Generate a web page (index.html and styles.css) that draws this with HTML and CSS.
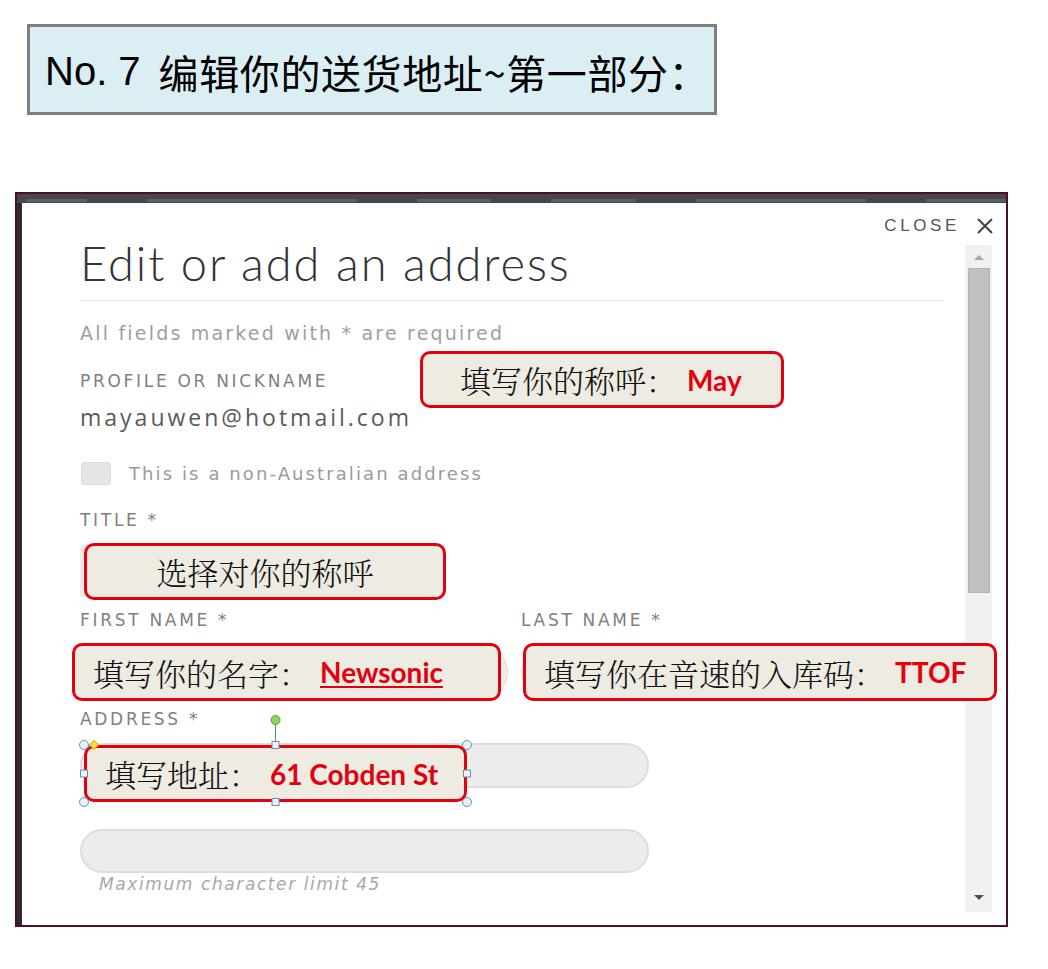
FILE: index.html
```html
<!DOCTYPE html>
<html lang="zh-CN">
<head>
    <meta charset="UTF-8">
    <meta name="viewport" content="width=device-width, initial-scale=1.0">
    <title>No. 7 编辑你的送货地址</title>
    <link rel="stylesheet" href="styles.css">
</head>
<body>
    <div class="slide-title"><span class="num">No. 7</span>编辑你的送货地址~第一部分：</div>

    <div class="shot">
        <!-- page nav peeking out behind the modal -->
        <div class="nav-strip">
            <span class="w1"></span><span class="w2"></span><span class="w3"></span><span class="w4"></span><span class="w5"></span><span class="w6"></span>
        </div>

        <div class="modal">
            <div class="close-row">
                <span>CLOSE</span>
                <svg width="16" height="16" viewBox="0 0 16 16"><path d="M1 1 L15 15 M15 1 L1 15" stroke="#444" stroke-width="2" fill="none"/></svg>
            </div>

            <div class="form">
                <h1>Edit or add an address</h1>
                <p class="note">All fields marked with * are required</p>

                <div class="label profile-label">PROFILE OR NICKNAME</div>
                <div class="email">mayauwen@hotmail.com</div>

                <div class="check"><span class="box"></span>This is a non-Australian address</div>

                <div class="label title-label">TITLE *</div>
                <div class="select"></div>

                <div class="name-row">
                    <div>
                        <div class="label">FIRST NAME *</div>
                        <div class="field first"></div>
                    </div>
                    <div>
                        <div class="label">LAST NAME *</div>
                        <div class="field"></div>
                    </div>
                </div>

                <div class="label address-label">ADDRESS *</div>
                <div class="pill"></div>
                <div class="pill second"></div>
                <div class="hint">Maximum character limit 45</div>
            </div>

            <div class="scrollbar">
                <span class="arrow up"></span>
                <span class="thumb"></span>
                <span class="arrow down"></span>
            </div>

            <!-- annotation callouts over the form -->
            <div class="callout c-nick">填写你的称呼：<b>May</b></div>
            <div class="callout c-title">选择对你的称呼</div>
            <div class="callout c-first">填写你的名字：<b class="underlined">Newsonic</b></div>
            <div class="callout c-last">填写你在音速的入库码：<b>TTOF</b></div>
            <div class="callout c-address">填写地址：<b>61 Cobden St</b></div>

            <svg class="handles" width="984" height="722" viewBox="0 0 984 722">
                <line x1="253.5" y1="521" x2="253.5" y2="539" stroke="#5a7fa0" stroke-width="1"/>
                <circle cx="253.5" cy="517" r="4.5" fill="#8fd35a" stroke="#5b9a3a" stroke-width="1"/>
                <circle cx="62" cy="542" r="4.5" fill="#e6f3fa" stroke="#6e8ca8" stroke-width="1"/>
                <circle cx="445" cy="542" r="4.5" fill="#e6f3fa" stroke="#6e8ca8" stroke-width="1"/>
                <circle cx="62" cy="599" r="4.5" fill="#e6f3fa" stroke="#6e8ca8" stroke-width="1"/>
                <circle cx="445" cy="599" r="4.5" fill="#e6f3fa" stroke="#6e8ca8" stroke-width="1"/>
                <rect x="250" y="538.5" width="7" height="7" fill="#e6f3fa" stroke="#6e8ca8" stroke-width="1"/>
                <rect x="250" y="595.5" width="7" height="7" fill="#e6f3fa" stroke="#6e8ca8" stroke-width="1"/>
                <rect x="58.5" y="567" width="7" height="7" fill="#e6f3fa" stroke="#6e8ca8" stroke-width="1"/>
                <rect x="441.5" y="567" width="7" height="7" fill="#e6f3fa" stroke="#6e8ca8" stroke-width="1"/>
                <path d="M72 537.5 L76.5 542 L72 546.5 L67.5 542 Z" fill="#f6e33c" stroke="#b19a1c" stroke-width="1"/>
            </svg>
        </div>
    </div>
</body>
</html>
```

FILE: styles.css
```css
body { margin: 0; background: #fff; }

/* slide heading */
.slide-title {
    box-sizing: border-box;
    width: 690px; height: 91px;
    margin: 24px 0 0 27px;
    padding: 4px 0 0 15px;
    border: 3px solid #7f7f7f;
    background: #dbeef4;
    display: flex; align-items: center;
    font-family: "Noto Sans CJK SC", sans-serif;
    font-size: 40px; color: #000; white-space: nowrap;
    letter-spacing: 0.6px;
}
.slide-title .num { font-family: "Liberation Sans", sans-serif; margin-right: 18px; letter-spacing: 0; }

/* screenshot frame */
.shot {
    width: 984px;
    margin: 77px 0 0 15px;
    padding-left: 5px;
    border: 2px solid #4e0f2f;
    background: #2f2b2d;
}
.nav-strip {
    height: 9px; margin-left: -5px;
    background: #474747;
    display: flex; align-items: flex-end; gap: 60px;
    padding-left: 10px;
}
.nav-strip span { height: 3px; margin-bottom: 1px; background: #5f5f5f; border-radius: 1px; }
.nav-strip .w1 { width: 60px; }
.nav-strip .w2 { width: 210px; }
.nav-strip .w3 { width: 75px; }
.nav-strip .w4 { width: 85px; }
.nav-strip .w5 { width: 170px; }
.nav-strip .w6 { width: 80px; }

.modal {
    position: relative;
    height: 722px; box-sizing: border-box;
    background: #fff;
    padding: 14px 14px 13px 58px;
    display: grid;
    grid-template-columns: 1fr 27px;
    grid-template-rows: 22px 1fr;
    column-gap: 21px;
}

.close-row {
    grid-column: 1 / -1;
    justify-self: end;
    margin-right: -1px;
    display: flex; align-items: center; gap: 17px;
    height: 18px;
    font: 17px "Liberation Sans", sans-serif; letter-spacing: 3.6px; color: #555;
}

.form { font-family: "DejaVu Sans", sans-serif; }
.form h1 {
    margin: 1px 0 14px;
    font: 300 47px/46px "Lato", sans-serif; color: #333; letter-spacing: 1.9px;
    padding-bottom: 14px;
    border-bottom: 1px solid #e3e3e3;
}
.note { margin: 21px 0 0; font-size: 19px; line-height: 22px; color: #9e9e9e; letter-spacing: 2.2px; }
.label { font: 17px/20px "DejaVu Sans", sans-serif; color: #808080; letter-spacing: 2.7px; }
.profile-label { margin-top: 27px; }
.email { margin-top: 13px; font: 23px/27px "Open Sans", sans-serif; color: #5a5a5a; letter-spacing: 3px; }

.check { margin-top: 31px; display: flex; align-items: center; gap: 18px; height: 23px; font-size: 18px; color: #9a9a9a; letter-spacing: 2.1px; }
.check .box { width: 30px; height: 23px; margin-left: 1px; border-radius: 3px; background: #e6e6e6; border: 1px solid #dcdcdc; box-sizing: border-box; }

.title-label { margin-top: 25px; }
.select { margin-top: 15px; width: 340px; height: 52px; border-radius: 4px; background: #ececec; }

.name-row { margin-top: 13px; display: grid; grid-template-columns: 441px 1fr; }
.field { margin-top: 15px; height: 55px; border-radius: 28px; background: #ececec; border: 1px solid #dddddd; box-sizing: border-box; }
.field.first { width: 428px; }

.address-label { margin-top: 9px; }
.pill { margin-top: 14px; width: 569px; height: 45px; border-radius: 23px; background: #ececec; border: 2px solid #dedede; box-sizing: border-box; }
.pill.second { margin-top: 41px; height: 44px; }
.hint { margin: 1px 0 0 19px; font: italic 17px/20px "DejaVu Sans", sans-serif; color: #a8a8a8; letter-spacing: 1.6px; }

/* fake scrollbar */
.scrollbar { margin-top: 6px; background: #f1f1f1; display: flex; flex-direction: column; align-items: center; }
.scrollbar .arrow { width: 0; height: 0; border-left: 5px solid transparent; border-right: 5px solid transparent; }
.scrollbar .up { margin-top: 10px; border-bottom: 5px solid #a8a8a8; }
.scrollbar .thumb { margin-top: 8px; width: 22px; height: 325px; background: #c1c1c1; border: 1px solid #b3b3b3; box-sizing: border-box; }
.scrollbar .down { margin-top: auto; margin-bottom: 12px; border-top: 5px solid #505050; }

/* annotation callouts */
.callout {
    position: absolute;
    box-sizing: border-box;
    height: 57px;
    display: flex; align-items: center;
    padding-left: 18px;
    border: 3px solid #e3000f;
    border-radius: 10px;
    background: #eeebe2;
    font: 300 31px "Noto Serif CJK SC", "Noto Sans CJK SC", serif; color: #111;
    white-space: nowrap;
}
.callout b { font: 700 28px "Lato", sans-serif; color: #e3000f; margin-left: 10px; }
.callout b.underlined { text-decoration: underline; text-decoration-thickness: 2px; text-underline-offset: 3px; }
.c-nick { left: 398px; top: 148px; width: 364px; padding-left: 37px; }
.c-title { left: 62px; top: 340px; width: 362px; justify-content: center; padding-left: 0; }
.c-first { left: 50px; top: 440px; width: 429px; height: 58px; }
.c-last { left: 501px; top: 440px; width: 474px; height: 58px; }
.c-address { left: 62px; top: 542px; width: 383px; }
.handles { position: absolute; left: 0; top: 0; pointer-events: none; }
```
